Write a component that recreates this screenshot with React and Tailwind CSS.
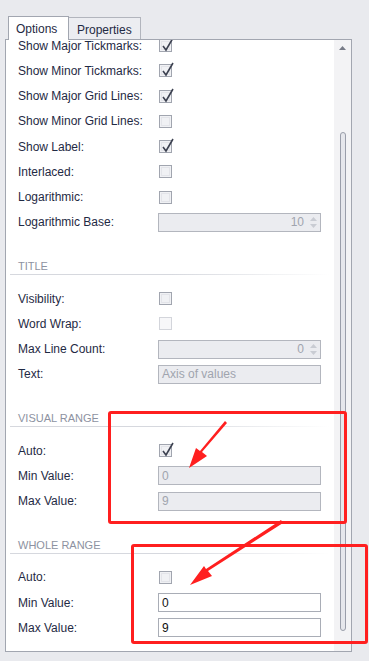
import React from 'react';

const font = { fontFamily: '"Liberation Sans", Arial, sans-serif' };

function Check({ checked, disabled }) {
  return (
    <div
      className={
        'relative ml-[1px] w-[13px] h-[13px] border ' +
        (disabled ? 'border-[#d3d5db] bg-[#f7f7f9]' : 'border-[#a1a5af] bg-[#f0f1f4]')
      }
    >
      {!disabled && <div className="absolute inset-[1px] border border-[#e3e4e9]" />}
      {checked && (
        <svg className="absolute left-[1px] -top-[3px]" width="14" height="15" viewBox="0 0 14 15">
          <path d="M2 9 L5 13 L12 1" fill="none" stroke="#3c4150" strokeWidth="1.6" />
        </svg>
      )}
    </div>
  );
}

function Spin() {
  return (
    <div className="flex flex-col items-center gap-[3px] mr-[3px]">
      <svg width="7" height="4" viewBox="0 0 7 4"><path d="M0 4 L3.5 0 L7 4 Z" fill="#c9ccd3" /></svg>
      <svg width="7" height="4" viewBox="0 0 7 4"><path d="M0 0 L3.5 4 L7 0 Z" fill="#c9ccd3" /></svg>
    </div>
  );
}

function Input({ value, disabled, spin, right }) {
  return (
    <div
      className={
        'w-[163px] h-[19px] border flex items-center text-[12px] ' +
        (disabled
          ? 'bg-[#ebecf0] border-[#b3b6be] text-[#a0a4ae]'
          : 'bg-white border-[#a9adb6] text-[#111]')
      }
    >
      <span className={'flex-1 px-[3px] ' + (right ? 'text-right pr-[6px]' : '')}>{value}</span>
      {spin && <Spin />}
    </div>
  );
}

function Row({ label, children }) {
  return (
    <div className="h-[25.25px] flex items-center">
      <div className="w-[152px] pl-[12px] text-[12px] text-[#1f2a44]">{label}</div>
      <div className="flex items-center">{children}</div>
    </div>
  );
}

function Heading({ title }) {
  return (
    <div className="h-[51px] pt-[25px] pl-[4px]">
      <div className="h-[13px] leading-[13px] pl-[8px] text-[11px] text-[#8d92a1] uppercase">{title}</div>
      <div className="mt-[1px] h-px w-[320px] bg-gradient-to-r from-[#d6d8de] via-[#d6d8de] to-white" />
    </div>
  );
}

export default function App() {
  return (
    <div className="relative w-[369px] h-[661px] bg-[#e9eaee] overflow-hidden" style={font}>
      {/* tabs */}
      <div className="flex items-end h-[39px] pl-[8px]">
        <div className="relative z-10 w-[61px] h-[24px] bg-white border border-b-0 border-[#a2a6b0] text-[12px] text-[#1f2a44] pl-[7px] pt-[3px] -mb-px">
          Options
        </div>
        <div className="w-[72px] h-[22px] bg-[#ecedf1] border border-l-0 border-b-0 border-[#b2b5bd] text-[12px] text-[#1f2a44] pl-[8px] pt-[3px]">
          Properties
        </div>
      </div>
      {/* panel */}
      <div className="ml-[5px] w-[347px] h-[613px] bg-white border border-[#a2a6b0] flex overflow-hidden">
        <div className="flex-1 overflow-hidden">
          <div className="-mt-[7px]">
            <Row label="Show Major Tickmarks:"><Check checked /></Row>
            <Row label="Show Minor Tickmarks:"><Check checked /></Row>
            <Row label="Show Major Grid Lines:"><Check checked /></Row>
            <Row label="Show Minor Grid Lines:"><Check /></Row>
            <Row label="Show Label:"><Check checked /></Row>
            <Row label="Interlaced:"><Check /></Row>
            <Row label="Logarithmic:"><Check /></Row>
            <Row label="Logarithmic Base:"><Input value="10" disabled spin right /></Row>
            <Heading title="Title" />
            <Row label="Visibility:"><Check /></Row>
            <Row label="Word Wrap:"><Check disabled /></Row>
            <Row label="Max Line Count:"><Input value="0" disabled spin right /></Row>
            <Row label="Text:"><Input value="Axis of values" disabled /></Row>
            <Heading title="Visual Range" />
            <Row label="Auto:"><Check checked /></Row>
            <Row label="Min Value:"><Input value="0" disabled /></Row>
            <Row label="Max Value:"><Input value="9" disabled /></Row>
            <Heading title="Whole Range" />
            <Row label="Auto:"><Check /></Row>
            <Row label="Min Value:"><Input value="0" /></Row>
            <Row label="Max Value:"><Input value="9" /></Row>
          </div>
        </div>
        {/* scrollbar */}
        <div className="w-[17px] bg-[#f3f3f5] flex flex-col items-center">
          <svg className="mt-[6px]" width="7" height="4" viewBox="0 0 7 4"><path d="M0 4 L3.5 0 L7 4 Z" fill="#777b87" /></svg>
          <div className="mt-[82px] w-[6px] h-[499px] rounded-full border border-[#9a9eaa] bg-[#e6e7ec]" />
        </div>
      </div>

      {/* annotations */}
      <div className="absolute left-[108px] top-[411px] w-[239px] h-[113px] border-[3px] border-[#ff1f1f] rounded-[3px]" />
      <div className="absolute left-[131px] top-[544px] w-[237px] h-[100px] border-[3px] border-[#ff1f1f] rounded-[3px]" />
      <svg className="absolute left-0 top-0 pointer-events-none" width="369" height="661">
        <path d="M227 423 L202 452 L207 456 L189 468 L196 448 L200 451 L225 421 Z" fill="#ff1f1f" />
        <path d="M283 523 L208 571 L212 576 L190 585 L204 566 L206 569 L281 520 Z" fill="#ff1f1f" />
      </svg>
    </div>
  );
}
